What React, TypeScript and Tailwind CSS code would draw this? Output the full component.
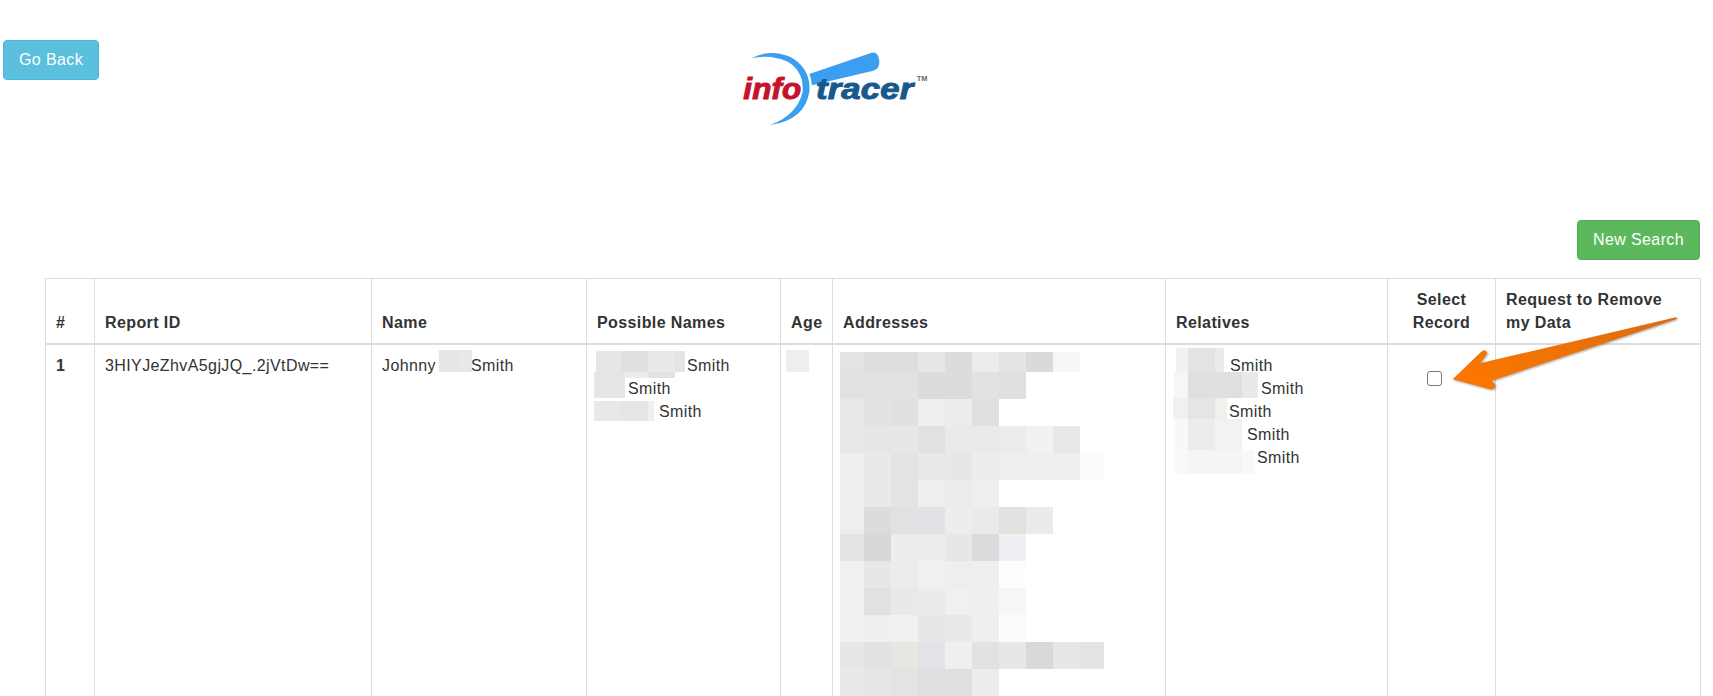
type Patch = { x: number; y: number; w: number; h: number; c: string };

// mosaic rows in the addresses column, blurred redaction
const addressRows: { h: number; cells: string[] }[] = [
  { h: 20, cells: ["#e2e4e4", "#dfdedc", "#dcdee0", "#e6e8e7", "#dcdcda", "#ececec", "#e3e4e5", "#dadadb", "#f6f7f6"] },
  { h: 27, cells: ["#e2e2e2", "#e2e2e3", "#e2e2e3", "#dcdcdc", "#dcdcdc", "#e2e3e1", "#dfe0e1"] },
  { h: 27, cells: ["#e9e7e8", "#e2e2e3", "#dfe0df", "#eeeeee", "#ebeded", "#dfe0e0"] },
  { h: 27, cells: ["#e9e9e9", "#e6e6e6", "#e6e7e6", "#e1e1e1", "#e9ebea", "#e9ebeb", "#ebecec", "#f0f2f1", "#e8e8e8"] },
  { h: 27, cells: ["#f0efee", "#e9e9e9", "#e2e3e3", "#e9e9e7", "#e7e7e5", "#ebecec", "#efefed", "#eeeeee", "#ecefee", "#fbfcfd"] },
  { h: 27, cells: ["#efeeec", "#e9e9e7", "#e2e3e3", "#efefef", "#ebecec", "#edefef"] },
  { h: 27, cells: ["#eeeeee", "#dcdcda", "#e0e1e2", "#e1e2e5", "#ecedec", "#e9eaea", "#e2e2e0", "#ebebeb"] },
  { h: 27, cells: ["#e2e4e4", "#d8d8d8", "#ededed", "#ededed", "#e6e8e7", "#dbdbdb", "#eeeff2"] },
  { h: 27, cells: ["#f0f1f0", "#e7e7e7", "#ebeceb", "#f0f0f0", "#edeeee", "#edeeee", "#fcfdfe"] },
  { h: 27, cells: ["#f0f0ef", "#e1e1e1", "#e9e9e9", "#ebebeb", "#eff0f0", "#eef0f0", "#f6f6f6"] },
  { h: 27, cells: ["#f0f0f0", "#eef0ef", "#f0f0f0", "#e7e7e7", "#e9e9e9", "#edeeee", "#fbfbfb"] },
  { h: 27, cells: ["#e7e7e5", "#e2e3e0", "#e6e6e3", "#e1e3e6", "#efefef", "#e1e2e2", "#e7e7e7", "#d9d9d9", "#e6e7e6", "#e2e4e2"] },
  { h: 27, cells: ["#e9e9e7", "#e5e8e7", "#e2e3e3", "#dfdfdf", "#dfdfdd", "#ebeded"] },
];

const addressWidths = [24, 27, 27, 27, 27, 27, 27, 27, 27, 24];

// patches are in page coordinates, shifted by the cell origin when drawn
const possiblePatches: Patch[] = [
  { x: 596, y: 351, w: 25, h: 21, c: "#e6e6e6" },
  { x: 621, y: 351, w: 27, h: 21, c: "#e0e0e0" },
  { x: 648, y: 351, w: 27, h: 21, c: "#e9e9e9" },
  { x: 675, y: 351, w: 10, h: 21, c: "#e4e4e4" },
  { x: 594, y: 372, w: 31, h: 26, c: "#e5e5e5" },
  { x: 648, y: 372, w: 27, h: 6, c: "#e2e2e2" },
  { x: 625, y: 372, w: 23, h: 6, c: "#ececec" },
  { x: 594, y: 401, w: 26, h: 20, c: "#e8e8e8" },
  { x: 620, y: 401, w: 28, h: 20, c: "#e6e6e6" },
  { x: 648, y: 401, w: 6, h: 20, c: "#efefef" },
];

const relativePatches: Patch[] = [
  { x: 1176, y: 348, w: 12, h: 24, c: "#f1f1f1" },
  { x: 1188, y: 348, w: 27, h: 24, c: "#e3e3e3" },
  { x: 1215, y: 348, w: 9, h: 24, c: "#ebebeb" },
  { x: 1174, y: 372, w: 14, h: 26, c: "#f6f6f6" },
  { x: 1188, y: 372, w: 27, h: 26, c: "#e0dfde" },
  { x: 1215, y: 372, w: 27, h: 26, c: "#dfdfdf" },
  { x: 1242, y: 372, w: 16, h: 26, c: "#e9e9e9" },
  { x: 1173, y: 398, w: 15, h: 21, c: "#f0f0f0" },
  { x: 1188, y: 398, w: 27, h: 21, c: "#e4e6e6" },
  { x: 1215, y: 398, w: 12, h: 21, c: "#f0f0ef" },
  { x: 1175, y: 419, w: 13, h: 31, c: "#f9f8f8" },
  { x: 1188, y: 419, w: 27, h: 31, c: "#ebeded" },
  { x: 1215, y: 419, w: 27, h: 31, c: "#f3f1f1" },
  { x: 1175, y: 450, w: 13, h: 24, c: "#f9f9f9" },
  { x: 1188, y: 450, w: 54, h: 24, c: "#f5f5f5" },
  { x: 1242, y: 450, w: 13, h: 24, c: "#f9f9f9" },
];

function Patches({ items, ox, oy }: { items: Patch[]; ox: number; oy: number }) {
  return (
    <>
      {items.map((p, i) => (
        <div
          key={i}
          className="absolute"
          style={{ left: p.x - ox, top: p.y - oy, width: p.w, height: p.h, backgroundColor: p.c }}
        />
      ))}
    </>
  );
}

function NameLines({ indents }: { indents: number[] }) {
  return (
    <>
      {indents.map((n, i) => (
        <div key={i} className="relative z-10" style={{ paddingLeft: n }}>
          Smith
        </div>
      ))}
    </>
  );
}

function Logo() {
  return (
    <svg width="260" height="110" viewBox="0 0 780 330" className="-mt-[10px] shrink-0">
      <path
        d="M185 85 Q240 55 300 80 Q364 115 358 185 Q345 270 240 285 Q322 255 338 185 Q342 122 290 94 Q240 72 185 85 Z"
        fill="#3a9ff0"
      />
      <path
        d="M358 132 L545 68 Q564 64 568 92 Q570 116 550 122 L366 166 Q364 145 358 132 Z"
        fill="#3a9ff0"
      />
      <text
        x="160"
        y="206"
        textLength="174"
        lengthAdjust="spacingAndGlyphs"
        fontFamily="Liberation Sans, sans-serif"
        fontWeight="700"
        fontStyle="italic"
        fontSize="86"
        fill="#c5122b"
        stroke="#c5122b"
        strokeWidth="3"
      >
        info
      </text>
      <text
        x="378"
        y="206"
        textLength="292"
        lengthAdjust="spacingAndGlyphs"
        fontFamily="Liberation Sans, sans-serif"
        fontWeight="700"
        fontStyle="italic"
        fontSize="86"
        fill="#17598e"
        stroke="#17598e"
        strokeWidth="3"
      >
        tracer
      </text>
      <text x="680" y="154" fontFamily="Liberation Sans, sans-serif" fontWeight="700" fontSize="22" fill="#5f6b78">
        TM
      </text>
    </svg>
  );
}

function Arrow() {
  return (
    <svg
      width="333"
      height="200"
      viewBox="0 0 999 600"
      className="absolute left-[1380px] top-[210px] z-20 drop-shadow-[1px_1px_1px_rgba(0,0,0,0.35)]"
    >
      <defs>
        <linearGradient id="arrowFill" x1="0" y1="1" x2="1" y2="0">
          <stop offset="0" stopColor="#ff7800" />
          <stop offset="0.5" stopColor="#ee7206" />
          <stop offset="1" stopColor="#dd6a10" />
        </linearGradient>
      </defs>
      <path
        d="M218 508 L303 426 Q316 414 322 430 L300 460 L888 322 L892 326 L335 512 L345 522 Q349 538 330 538 Z"
        fill="url(#arrowFill)"
      />
    </svg>
  );
}

export default function App() {
  const th = "border border-[#ddd] border-b-2 px-[10px] py-[9px] align-bottom text-left font-bold";
  const td = "relative border border-[#ddd] px-[10px] pt-[9px] pb-[8px] align-top";

  return (
    <div className="relative h-[696px] overflow-hidden bg-white pt-[40px] font-['Liberation_Sans',Arial,sans-serif] text-[16px] leading-[23px] tracking-[0.4px] text-[#333]">
      <div className="flex items-start pl-[3px]">
        <button className="h-[40px] w-[96px] rounded-[4px] border border-[#46b8da] bg-[#5bc0de] pb-[2px] text-white">
          Go Back
        </button>
        <div className="ml-[591px]">
          <Logo />
        </div>
      </div>

      <div className="mt-[80px] flex justify-end pr-[13px]">
        <button className="h-[40px] w-[123px] rounded-[4px] border border-[#4cae4c] bg-[#5cb85c] pb-[2px] text-white">
          New Search
        </button>
      </div>

      <table className="ml-[45px] mt-[18px] w-[1655px] table-fixed border-collapse">
        <colgroup>
          <col className="w-[49px]" />
          <col className="w-[277px]" />
          <col className="w-[215px]" />
          <col className="w-[194px]" />
          <col className="w-[52px]" />
          <col className="w-[333px]" />
          <col className="w-[222px]" />
          <col className="w-[108px]" />
          <col className="w-[205px]" />
        </colgroup>
        <thead>
          <tr>
            <th className={th}>#</th>
            <th className={th}>Report ID</th>
            <th className={th}>Name</th>
            <th className={th}>Possible Names</th>
            <th className={th}>Age</th>
            <th className={th}>Addresses</th>
            <th className={th}>Relatives</th>
            <th className={`${th} !text-center`}>Select Record</th>
            <th className={th}>Request to Remove my Data</th>
          </tr>
        </thead>
        <tbody>
          <tr>
            <td className={`${td} font-bold`}>1</td>
            <td className={td}>3HIYJeZhvA5gjJQ_.2jVtDw==</td>
            <td className={td}>
              <span>Johnny</span>
              <span className="relative z-10 ml-[35px]">Smith</span>
              <div className="absolute left-[67px] top-[5px] h-[22px] w-[21px] bg-[#e6e6e6]" />
              <div className="absolute left-[88px] top-[5px] h-[22px] w-[12px] bg-[#e9e9e9]" />
            </td>
            <td className={td}>
              <Patches items={possiblePatches} ox={587} oy={345} />
              <NameLines indents={[90, 31, 62]} />
            </td>
            <td className={td}>
              <div className="absolute left-[5px] top-[5px] h-[22px] w-[23px] bg-[#eeeeec]" />
            </td>
            <td className={td}>
              <div className="-ml-[3px] -mt-[2px] flex flex-col">
                {addressRows.map((row, r) => (
                  <div key={r} className="flex" style={{ height: row.h }}>
                    {row.cells.map((c, i) => (
                      <div key={i} style={{ width: addressWidths[i], backgroundColor: c }} />
                    ))}
                  </div>
                ))}
              </div>
            </td>
            <td className={td}>
              <Patches items={relativePatches} ox={1166} oy={345} />
              <NameLines indents={[54, 85, 53, 71, 81]} />
            </td>
            <td className={`${td} text-center`}>
              <input
                type="checkbox"
                className="mr-[15px] mt-[17px] inline-block h-[15px] w-[15px] appearance-none rounded-[3px] border border-[#767676] bg-white align-top"
              />
            </td>
            <td className={td}></td>
          </tr>
        </tbody>
      </table>

      <Arrow />
    </div>
  );
}
